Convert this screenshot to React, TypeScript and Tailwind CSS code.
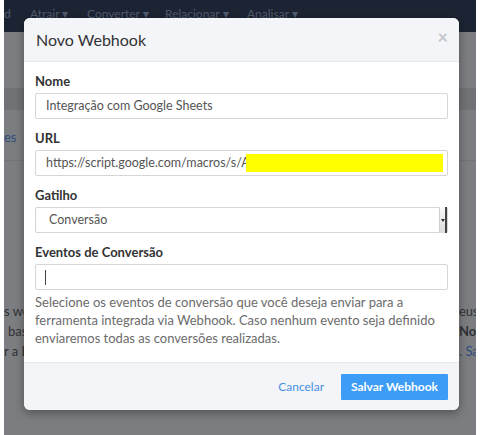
import React from "react";

const font = { fontFamily: 'Lato, "Open Sans", "Liberation Sans", sans-serif' };

function Field({ label, children }: { label: string; children: React.ReactNode }) {
  return (
    <div className="flex flex-col">
      <label className="text-[13px] font-bold text-[#333] leading-[18px] mb-[3px]">{label}</label>
      {children}
    </div>
  );
}

function App() {
  return (
    <div className="w-[482px] h-[435px] bg-white relative overflow-hidden" style={font}>
      {/* dimmed page behind the modal */}
      <div className="ml-[4px] w-[472px] h-[435px] bg-[#7c7d80] flex flex-col">
        <div className="h-[32px] bg-[#1c2433] flex items-start pt-[5px] text-[12px] text-[#4f5a6c] whitespace-nowrap">
          <span className="w-[26px]">d</span>
          <span className="w-[57px]">Atrair ▾</span>
          <span className="w-[78px]">Converter ▾</span>
          <span className="w-[82px]">Relacionar ▾</span>
          <span>Analisar ▾</span>
        </div>
        <div className="h-[56px]" />
        <div className="h-[22px] bg-[#717275]" />
        <div className="h-[50px] flex items-center">
          <span className="text-[13px] text-[#2f4d7a] mt-[5px]">es</span>
        </div>
        <div className="h-px bg-[#737477]" />
        <div className="h-[140px]" />
        <div className="flex justify-between text-[13px] text-[#303236] leading-[20px]">
          <div className="flex flex-col w-[20px] overflow-hidden whitespace-nowrap">
            <span>s we</span>
            <span className="ml-[4px]">bas</span>
            <span>r a L</span>
          </div>
          <div className="flex flex-col w-[17px] overflow-hidden whitespace-nowrap">
            <span>eus</span>
            <span className="font-bold">Nov</span>
            <span className="text-[#2f4d7a]">. Sa</span>
          </div>
        </div>
      </div>

      {/* modal */}
      <div className="absolute left-[24px] top-[18px] w-[435px] h-[392px] rounded-[6px] overflow-hidden bg-white shadow-[0_3px_10px_rgba(0,0,0,0.35)] flex flex-col">
        <div className="h-[44px] bg-[#f4f5f8] border-b border-[#e3e5ea] flex items-center justify-between pl-[12px] pr-[11px]">
          <h4 className="text-[16px] text-[#333] leading-none">Novo Webhook</h4>
          <span className="text-[18px] font-bold text-[#c4c6ca] leading-none -mt-[6px]">×</span>
        </div>
        <div className="flex-1 flex flex-col gap-[10px] px-[11px] pt-[10px]">
          <Field label="Nome">
            <div className="h-[26px] border border-[#d6d6d6] rounded-[2px] flex items-center pl-[10px] text-[12.5px] text-[#555]">
              Integração com Google Sheets
            </div>
          </Field>
          <Field label="URL">
            <div className="h-[26px] border border-[#d6d6d6] rounded-[2px] flex items-center pl-[10px] pr-[4px] text-[12.5px] text-[#555] whitespace-nowrap overflow-hidden">
              <span>https://script.google.com/macros/s/A</span>
              <span className="-ml-[4px] flex-1 h-[18px] bg-[#ffff00]" />
            </div>
          </Field>
          <Field label="Gatilho">
            <div className="h-[26px] border border-[#d6d6d6] rounded-[2px] flex items-center justify-between pl-[13px] text-[12.5px] text-[#555]">
              <span>Conversão</span>
              <span className="h-[26px] w-[8px] border-l border-[#cfcfcf] bg-gradient-to-b from-[#fafafa] to-[#dcdcdc] border-r-2 border-r-[#444] flex items-center justify-center">
                <span className="w-0 h-0 border-l-[2px] border-r-[2px] border-t-[3px] border-l-transparent border-r-transparent border-t-[#333]" />
              </span>
            </div>
          </Field>
          <Field label="Eventos de Conversão">
            <div className="h-[26px] border border-[#d6d6d6] rounded-[2px] flex items-center pl-[9px]">
              <span className="w-px h-[15px] bg-[#444]" />
            </div>
            <p className="mt-[3px] text-[13px] leading-[18px] text-[#6b6b6b]">
              Selecione os eventos de conversão que você deseja enviar para a ferramenta integrada via Webhook. Caso nenhum evento seja definido enviaremos todas as conversões realizadas.
            </p>
          </Field>
        </div>
        <div className="h-[48px] bg-[#f4f5f8] border-t border-[#e3e5ea] flex items-center justify-end gap-[17px] pr-[11px]">
          <span className="text-[12px] text-[#4a90e2]">Cancelar</span>
          <button className="h-[26px] px-[10px] bg-[#3d9df6] text-white text-[12px] font-bold rounded-[1px]">
            Salvar Webhook
          </button>
        </div>
      </div>
    </div>
  );
}

export default App;
